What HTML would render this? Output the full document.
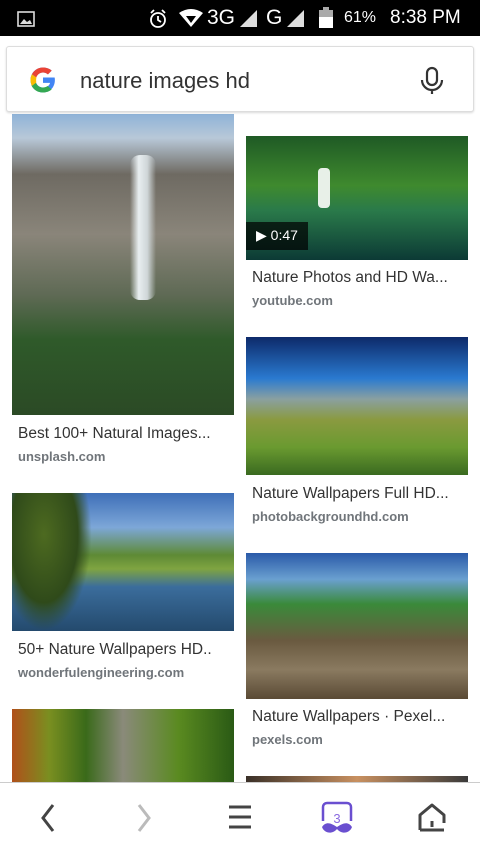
<!DOCTYPE html>
<html><head><meta charset="utf-8"><style>
*{margin:0;padding:0;box-sizing:border-box}
body{width:480px;height:854px;overflow:hidden;background:#fff;font-family:"Liberation Sans",Roboto,sans-serif;position:relative}
.sb{position:absolute;top:0;left:0;width:480px;height:36px;background:#000;color:#fff}
.abs{position:absolute}
.img{position:absolute}
.t{position:absolute;font-size:15.5px;color:#333;white-space:nowrap;overflow:hidden}
.u{position:absolute;font-size:13px;color:#70757a;font-weight:bold;white-space:nowrap}
</style></head><body>
<div class="sb">
<svg class="abs" style="left:17px;top:11px" width="20" height="16"><rect x="1" y="1" width="16" height="14" fill="none" stroke="#ddd" stroke-width="1.6"/><path d="M3 13 L7 8 L10 11 L13 9 L15 13Z" fill="#ddd"/></svg>
<svg class="abs" style="left:148px;top:8px" width="22" height="22"><circle cx="10" cy="12" r="7" fill="none" stroke="#fff" stroke-width="1.8"/><path d="M10 8v4l3 2M3 5l3-3M17 5l-3-3" stroke="#fff" stroke-width="1.8" fill="none"/></svg>
<svg class="abs" style="left:178px;top:8px" width="26" height="20"><path d="M1 5 Q13 -3 25 5 L13 19Z" fill="#fff"/><path d="M8 8h10l-5 7z" fill="#000"/></svg>
<div class="abs" style="left:207px;top:6px;font-size:21px">3G</div>
<svg class="abs" style="left:240px;top:10px" width="18" height="18"><path d="M0 17L17 0V17Z" fill="#ddd"/></svg>
<div class="abs" style="left:266px;top:6px;font-size:21px">G</div>
<svg class="abs" style="left:287px;top:10px" width="18" height="18"><path d="M0 17L17 0V17Z" fill="#ddd"/></svg>
<svg class="abs" style="left:319px;top:7px" width="14" height="21"><rect x="4" y="0" width="6" height="3" fill="#aaa"/><rect x="0" y="3" width="14" height="18" fill="#aaa"/><rect x="0" y="10" width="14" height="11" fill="#fff"/></svg>
<div class="abs" style="left:344px;top:9px;font-size:16px">61%</div>
<div class="abs" style="left:390px;top:7px;font-size:19px">8:38 PM</div>
</div>

<div class="img" style="left:12px;top:114px;width:222px;height:301px;background:linear-gradient(180deg,#8fb3d8 0%,#b8c8d8 8%,#6e6a62 20%,#8a857a 40%,#5f6a55 60%,#2f5a2a 75%,#2b4a25 100%)"></div>
<div class="img" style="left:130px;top:155px;width:26px;height:145px;background:linear-gradient(90deg,rgba(200,205,205,0),#e8eef0,#cfd6d8,rgba(180,180,170,0));border-radius:10px"></div>
<div class="t" style="left:18px;top:425px;width:212px">Best 100+ Natural Images...</div>
<div class="u" style="left:18px;top:449px">unsplash.com</div>
<div class="img" style="left:12px;top:493px;width:222px;height:138px;background:linear-gradient(180deg,#3e6fb8 0%,#7da7d8 25%,#5e8a35 45%,#7fa441 55%,#3b6d9c 68%,#244a6d 100%)"></div>
<div class="img" style="left:12px;top:493px;width:80px;height:138px;background:radial-gradient(ellipse at 40% 30%,#4d6a20 0%,#2f4a1a 50%,transparent 70%)"></div>
<div class="t" style="left:18px;top:641px;width:212px">50+ Nature Wallpapers HD..</div>
<div class="u" style="left:18px;top:665px">wonderfulengineering.com</div>
<div class="img" style="left:12px;top:709px;width:222px;height:80px;background:linear-gradient(90deg,#b0501a,#7a8f20,#3a6a1a,#8a8a7a 50%,#5a8a20,#2a5a15)"></div>

<div class="img" style="left:246px;top:136px;width:222px;height:124px;background:linear-gradient(180deg,#1f5a25 0%,#3f8a2e 40%,#2a7a4a 60%,#0c3a35 100%)"></div>
<div class="img" style="left:318px;top:168px;width:12px;height:40px;background:#e8f0e8;border-radius:4px"></div>
<div class="abs" style="left:246px;top:222px;width:62px;height:28px;background:rgba(0,0,0,.7);color:#fff;font-size:14px;padding:5px 0 0 10px">▶ 0:47</div>
<div class="t" style="left:252px;top:269px;width:212px">Nature Photos and HD Wa...</div>
<div class="u" style="left:252px;top:293px">youtube.com</div>
<div class="img" style="left:246px;top:337px;width:222px;height:138px;background:linear-gradient(180deg,#0d2a6a 0%,#2a7ad0 30%,#8aa0a0 45%,#8a9a40 60%,#6a9a30 80%,#3a6a20 100%)"></div>
<div class="t" style="left:252px;top:485px;width:212px">Nature Wallpapers Full HD...</div>
<div class="u" style="left:252px;top:509px">photobackgroundhd.com</div>
<div class="img" style="left:246px;top:553px;width:222px;height:146px;background:linear-gradient(180deg,#2a5aa8 0%,#6aa0d0 18%,#3a8a3a 35%,#6a5a40 60%,#8a7a60 80%,#5a4a35 100%)"></div>
<div class="t" style="left:252px;top:708px;width:212px">Nature Wallpapers · Pexel...</div>
<div class="u" style="left:252px;top:732px">pexels.com</div>
<div class="img" style="left:246px;top:776px;width:222px;height:10px;background:linear-gradient(90deg,#3a3028,#c89060,#3a3a3a)"></div>

<div class="abs" style="left:0;top:36px;width:480px;height:76px;background:#fff"></div>
<div class="abs" style="left:6px;top:46px;width:468px;height:66px;background:#fff;border:1px solid #ddd;border-radius:3px;box-shadow:0 1px 2px rgba(0,0,0,.15)"></div>
<svg class="abs" style="left:28px;top:65px" width="30" height="30" viewBox="0 0 48 48"><path d="M43.6 20H24v8.5h11.3C34.3 33 30 36 24 36c-6.6 0-12-5.4-12-12s5.4-12 12-12c3 0 5.8 1.1 7.9 3l6-6C34.4 5.8 29.5 4 24 4 13 4 4 13 4 24s9 20 20 20c10 0 19-7.3 19-20 0-1.3-.1-2.7-.4-4z" fill="#4285F4"/><path d="M6.3 14.7l7 5.1C15.1 15.1 19.2 12 24 12c3 0 5.8 1.1 7.9 3l6-6C34.4 5.8 29.5 4 24 4 16.3 4 9.7 8.3 6.3 14.7z" fill="#EA4335"/><path d="M24 44c5.4 0 10.2-1.8 13.9-5l-6.6-5.4C29.2 35.1 26.7 36 24 36c-5.900 0-10.3-3.8-11.6-8.9l-7 5.4C8.8 39.5 15.8 44 24 44z" fill="#34A853"/><path d="M6.3 14.7C4.8 17.5 4 20.7 4 24s.8 6.5 2.3 9.3l7-5.4C13.1 26.7 13 25.4 13 24s.2-2.7.5-4l-7.2-5.3z" fill="#FBBC05"/></svg>
<div class="abs" style="left:80px;top:68px;font-size:22px;color:#333">nature images hd</div>
<svg class="abs" style="left:420px;top:66px" width="24" height="30"><rect x="7" y="2" width="10" height="17" rx="5" fill="none" stroke="#333" stroke-width="2.2"/><path d="M2 14a10 10 0 0 0 20 0M12 24v4" fill="none" stroke="#333" stroke-width="2.2"/></svg>

<div class="abs" style="left:0;top:782px;width:480px;height:72px;background:#fff;border-top:1px solid #ccc"></div>
<svg class="abs" style="left:40px;top:803px" width="16" height="30"><path d="M13 2L3 15l10 13" fill="none" stroke="#444" stroke-width="3"/></svg>
<svg class="abs" style="left:136px;top:803px" width="16" height="30"><path d="M3 2l10 13L3 28" fill="none" stroke="#bbb" stroke-width="3"/></svg>
<svg class="abs" style="left:228px;top:804px" width="24" height="26"><path d="M1 3h22M1 13h22M1 23h22" stroke="#444" stroke-width="3"/></svg>
<svg class="abs" style="left:320px;top:801px" width="34" height="34"><path d="M3 20V6a4 4 0 0 1 4-4h20a4 4 0 0 1 4 4v14" fill="none" stroke="#6a4fd0" stroke-width="2.5"/><path d="M2 26c4-6 9-4 15 0 6-4 11-6 15 0-2 6-10 8-15 2-5 6-13 4-15-2z" fill="#6a4fd0"/><text x="17" y="22" text-anchor="middle" font-size="13" fill="#8a6ae0" font-family="Liberation Sans">3</text></svg>
<svg class="abs" style="left:418px;top:803px" width="28" height="30"><path d="M2 27V12L14 2l12 10v8M26 27H2" fill="none" stroke="#444" stroke-width="3" stroke-linejoin="round"/><rect x="12.5" y="18" width="3" height="6" fill="#444"/></svg>
</body></html>
